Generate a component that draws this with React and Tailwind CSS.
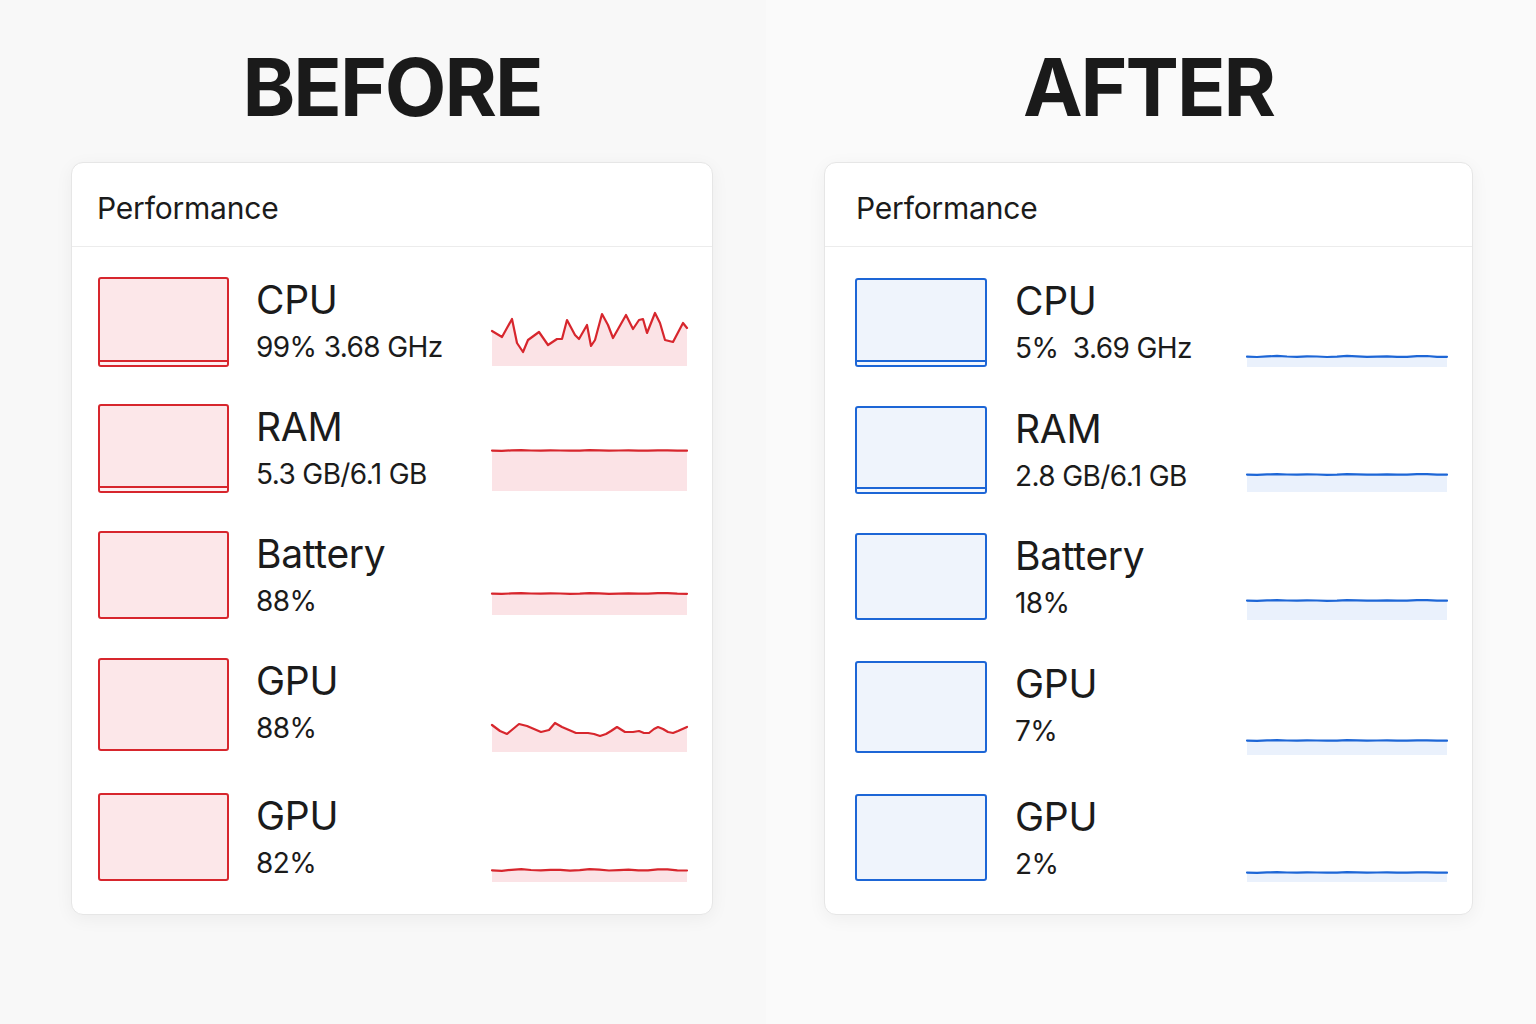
import React from 'react';

// points are [x, y] in svg pixels
const cpuBefore = [
  [0, 21], [10, 27], [20, 9], [25, 33], [31, 42], [36, 30], [47, 22], [56, 35], [65, 29], [70, 29],
  [75, 10], [83, 25], [87, 29], [95, 15], [99, 36], [103, 30], [110, 4], [116, 15], [121, 28], [134, 5],
  [141, 19], [147, 10], [151, 9], [155, 23], [163, 3], [168, 13], [173, 30], [181, 32], [191, 13], [195, 18],
];

const gpuBefore = [
  [0, 5], [8, 11], [15, 14], [21, 9], [27, 4], [35, 6], [49, 12], [57, 10], [63, 3], [70, 7], [84, 13],
  [96, 13], [102, 14], [108, 16], [114, 14], [119, 11], [125, 7], [133, 12], [141, 12], [147, 11], [152, 13],
  [157, 13], [162, 9], [166, 7], [171, 9], [176, 12], [181, 13], [186, 11], [195, 7],
];

function flat(w, y, wob) {
  const pts = [];
  for (let i = 0; i <= 20; i++) {
    const x = (w / 20) * i;
    const d = Math.sin(i * 1.7) * wob + Math.cos(i * 0.9) * wob * 0.5;
    pts.push([x, y + d]);
  }
  return pts;
}

const red = { line: '#d7262d', fill: '#fbe3e6', box: 'border-[#d7262d] bg-[#fce7e9]' };
const blue = { line: '#1d66d6', fill: '#eaf1fc', box: 'border-[#1d66d6] bg-[#eff4fc]' };

const before = [
  { name: 'CPU', value: '99% 3.68 GHz', bar: true, rowCls: 'h-[90px]', w: 195, h: 56, pts: cpuBefore, gCls: 'mb-[1px]' },
  { name: 'RAM', value: '5.3 GB/6.1 GB', bar: true, rowCls: 'h-[89px] mt-[37px]', w: 195, h: 42, pts: flat(195, 1.5, 0.2), gCls: 'mb-[2px]' },
  { name: 'Battery', value: '88%', bar: false, rowCls: 'h-[88px] mt-[38px]', w: 195, h: 23, pts: flat(195, 1.5, 0.3), gCls: 'mb-[4px]' },
  { name: 'GPU', value: '88%', bar: false, rowCls: 'h-[93px] mt-[39px]', w: 195, h: 32, pts: gpuBefore, gCls: '-mb-[1px]' },
  { name: 'GPU', value: '82%', bar: false, rowCls: 'h-[88px] mt-[42px]', w: 195, h: 14, pts: flat(195, 2, 0.6), gCls: '-mb-[1px]' },
];

const after = [
  { name: 'CPU', value: '5%\u00a0 3.69 GHz', bar: true, rowCls: 'h-[89px]', w: 200, h: 12, pts: flat(200, 1.5, 0.4), gCls: 'mb-0' },
  { name: 'RAM', value: '2.8 GB/6.1 GB', bar: true, rowCls: 'h-[88px] mt-[39px]', w: 200, h: 19, pts: flat(200, 1.5, 0.25), gCls: 'mb-[2px]' },
  { name: 'Battery', value: '18%', bar: false, rowCls: 'h-[87px] mt-[39px]', w: 200, h: 21, pts: flat(200, 1.5, 0.25), gCls: 'mb-0' },
  { name: 'GPU', value: '7%', bar: false, rowCls: 'h-[92px] mt-[41px]', w: 200, h: 16, pts: flat(200, 1.5, 0.2), gCls: '-mb-[2px]' },
  { name: 'GPU', value: '2%', bar: false, rowCls: 'h-[87px] mt-[41px]', w: 200, h: 11, pts: flat(200, 1.5, 0.2), gCls: '-mb-[1px]' },
];

function Graph({ w, h, pts, color }) {
  const line = pts.map((p, i) => (i === 0 ? 'M' : 'L') + p[0].toFixed(1) + ',' + p[1].toFixed(1)).join(' ');
  const area = line + ` L${w},${h} L0,${h} Z`;
  return (
    <svg width={w} height={h} viewBox={`0 0 ${w} ${h}`} className="block overflow-visible">
      <path d={area} fill={color.fill} />
      <path d={line} fill="none" stroke={color.line} strokeWidth="2.2" strokeLinejoin="round" strokeLinecap="round" />
    </svg>
  );
}

function Row({ item, color, boxW, textGap }) {
  return (
    <div className={`flex pr-[25px] ${item.rowCls}`}>
      <div className={`h-full ${boxW} shrink-0 rounded-[3px] border-2 ${color.box} flex flex-col justify-end`}>
        {item.bar && <div className={`h-[5px] border-t-2 ${color.box} bg-white/40`} />}
      </div>
      <div className={`${textGap} shrink-0 text-[#1b1b1b]`}>
        <div className="mt-[3px] text-[39px] leading-none tracking-[-0.3px]">{item.name}</div>
        <div className="mt-[14px] text-[28px] leading-none tracking-[-0.6px]">{item.value}</div>
      </div>
      <div className={`ml-auto flex flex-col justify-end ${item.gCls}`}>
        <Graph w={item.w} h={item.h} pts={item.pts} color={color} />
      </div>
    </div>
  );
}

function Card({ title, rows, color, width, padL, rowPadL, boxW, textGap, padT }) {
  return (
    <div className={`${width}`}>
      <h1 className="text-center text-[80px] leading-none font-bold tracking-[-2px] text-[#1a1a1a] mt-[47px]">{title}</h1>
      <div className="mt-[35px] bg-white rounded-[12px] border border-[#e6e6e6] shadow-[0_4px_18px_rgba(0,0,0,0.05)]">
        <div className={`h-[84px] flex items-center border-b border-[#ececec] ${padL}`}>
          <span className="text-[30px] leading-none text-[#1b1b1b] tracking-[-0.2px] mt-[6px]">Performance</span>
        </div>
        <div className={`${padT} pb-[33px] ${rowPadL}`}>
          {rows.map((r, i) => (
            <Row key={i} item={r} color={color} boxW={boxW} textGap={textGap} />
          ))}
        </div>
      </div>
    </div>
  );
}

export default function App() {
  return (
    <div className="flex h-screen min-h-[1024px] w-full" style={{ fontFamily: 'Inter, "Noto Sans", sans-serif' }}>
      <div className="w-[766px] shrink-0 bg-[#f8f8f8] pl-[71px]">
        <Card title="BEFORE" rows={before} color={red} width="w-[642px]" padL="pl-[25px]" rowPadL="pl-[26px]" boxW="w-[131px]" textGap="ml-[27px]" padT="pt-[30px]" />
      </div>
      <div className="flex-1 bg-[#fafafa] pl-[58px]">
        <Card title="AFTER" rows={after} color={blue} width="w-[649px]" padL="pl-[31px]" rowPadL="pl-[30px]" boxW="w-[132px]" textGap="ml-[28px]" padT="pt-[31px]" />
      </div>
    </div>
  );
}
